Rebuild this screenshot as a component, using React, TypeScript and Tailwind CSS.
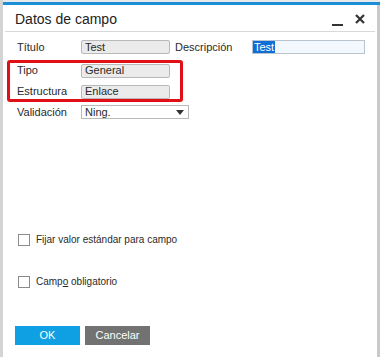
export default function App() {
    return (
        <div className="w-[380px] h-[357px] bg-[#e9e9e9] flex" style={{ fontFamily: '"Liberation Sans", Arial, sans-serif' }}>
            <div className="w-[3px] bg-[#d4d4d4]"></div>
            <div className="flex-1 flex flex-col pt-[2px]">
                <div className="h-[3px] bg-[#1a8fd6]"></div>
                <div className="flex-1 bg-white flex flex-col border-r-[3px] border-[#c9c9c9] relative">
                    <div className="h-[27px] mx-[2px] flex items-end justify-between border-b border-[#d8d8d8] pb-[5px]">
                        <span className="text-[14px] text-[#222] pl-[10px] leading-none">Datos de campo</span>
                        <div className="flex items-center gap-[12px] pr-[10px]">
                            <div className="w-[11px] h-[2px] bg-[#333] mt-[10px]"></div>
                            <svg width="10" height="10" viewBox="0 0 10 10" className="mb-[2px]">
                                <path d="M1 1 L9 9 M9 1 L1 9" stroke="#333" strokeWidth="2.2" />
                            </svg>
                        </div>
                    </div>
                    <div className="flex flex-col pt-[8px] text-[11px] text-[#2a2a2a]">
                        <div className="flex items-center h-[14px] pl-[14px]">
                            <span className="w-[64px]">Título</span>
                            <div className="w-[89px] h-[14px] bg-[#ebebeb] border border-[#b9b9b9] rounded-[2px] flex items-center pl-[3px] leading-none">Test</div>
                            <span className="ml-[5px] w-[77px]">Descripción</span>
                            <div className="w-[113px] h-[14px] bg-[#f2f8fd] border border-[#b9c4cf] flex items-center leading-none">
                                <span className="bg-[#0f6ed6] text-white px-[1px] h-[12px] flex items-center">Test</span>
                            </div>
                        </div>
                        <div className="relative mt-[6px] ml-[4px] w-[176px] h-[42px] border-[3px] border-[#e01016] rounded-[3px] flex flex-col justify-center gap-[7px]">
                            <div className="flex items-center h-[14px] pl-[7px]">
                                <span className="w-[64px]">Tipo</span>
                                <div className="w-[89px] h-[14px] bg-[#ebebeb] border border-[#b9b9b9] rounded-[2px] flex items-center pl-[3px] leading-none">General</div>
                            </div>
                            <div className="flex items-center h-[14px] pl-[7px]">
                                <span className="w-[64px]">Estructura</span>
                                <div className="w-[89px] h-[14px] bg-[#ebebeb] border border-[#b9b9b9] rounded-[2px] flex items-center pl-[3px] leading-none">Enlace</div>
                            </div>
                        </div>
                        <div className="flex items-center h-[14px] pl-[14px] mt-[3px]">
                            <span className="w-[64px]">Validación</span>
                            <div className="w-[108px] h-[14px] bg-white border border-[#b9b9b9] flex items-center justify-between pl-[3px] pr-[4px] leading-none">
                                <span>Ning.</span>
                                <svg width="8" height="5" viewBox="0 0 8 5"><path d="M0 0 H8 L4 5 Z" fill="#333" /></svg>
                            </div>
                        </div>
                        <div className="flex items-center h-[13px] pl-[15px] mt-[114px] gap-[6px] text-[10px]">
                            <div className="w-[12px] h-[12px] border border-[#8a8a8a] bg-white"></div>
                            <span>Fijar valor estándar para campo</span>
                        </div>
                        <div className="flex items-center h-[13px] pl-[15px] mt-[29px] gap-[6px] text-[10px]">
                            <div className="w-[12px] h-[12px] border border-[#8a8a8a] bg-white"></div>
                            <span>Camp<span className="underline">o</span> obligatorio</span>
                        </div>
                        <div className="flex gap-[5px] pl-[12px] mt-[38px]">
                            <button className="w-[65px] h-[19px] bg-[#0fa0e4] text-white text-[11px] leading-none">OK</button>
                            <button className="w-[65px] h-[19px] bg-[#727272] text-white text-[11px] leading-none">Cancelar</button>
                        </div>
                    </div>
                </div>
            </div>
        </div>
    );
}
